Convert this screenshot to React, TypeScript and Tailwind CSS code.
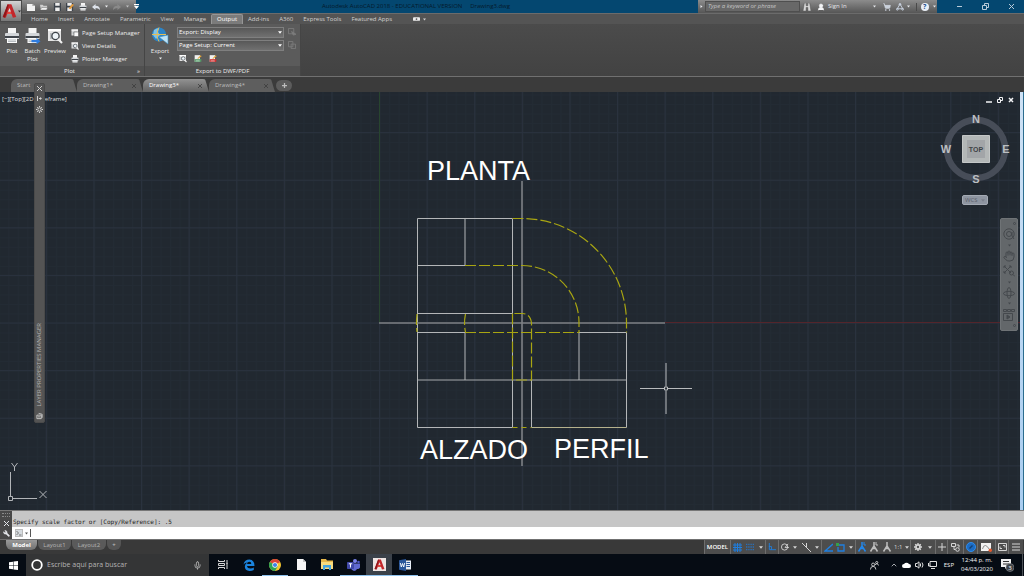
import React from 'react'
import { clsx } from 'clsx'
import { ChevronUp, Hand, Mic, Settings, ShoppingCart, UserRound, Wrench } from 'lucide-react'

const Caret: React.FC<{ className?: string }> = ({ className }) => (
    <svg viewBox="0 0 6 4" className={clsx('w-1 h-[3px] shrink-0 fill-current', className)}>
        <path d="M0 0h6L3 4z" />
    </svg>
)

const PrinterGlyph: React.FC<{ className?: string; arrow?: boolean }> = ({ className, arrow }) => (
    <svg viewBox="0 0 16 16" className={className}>
        <path d="M4 0h8v6H4z" fill="#f4f4f4" />
        <path d="M1 6q0-1 1-1h12q1 0 1 1v5H1z" fill="#d3d6d9" />
        <path d="M1 8h14v2H1z" fill="#41464c" />
        <path d="M3 10h10v5H3z" fill="#fafafa" />
        <path d="M4 12h8M4 13.500h8" stroke="#9aa0a6" strokeWidth=".7" />
        {arrow && <path d="M7 12h5v-2l4 3.200-4 3v-2H7z" fill="#2f7de0" />}
    </svg>
)

const PageGlyph: React.FC<{ className?: string; lens?: boolean }> = ({ className, lens }) => (
    <svg viewBox="0 0 16 16" className={className}>
        <path d="M1 1h13v12H1z" fill="#e4e4e4" />
        <path d="M1 1h13v2H1z" fill="#fff" />
        <path d="M3 5h9v6H3z" fill="#b6babd" />
        {lens ? (
            <>
                <circle cx="8.500" cy="8" r="3.600" fill="#eef4f8" stroke="#3f454b" strokeWidth="1.300" />
                <path d="m11 11 4 4" stroke="#f0f0f0" strokeWidth="2.200" />
            </>
        ) : (
            <path d="M6 6h9v9H6z" fill="#fafafa" stroke="#4a4a4a" />
        )}
    </svg>
)

const SheetGlyph: React.FC<{ className?: string; tone: string }> = ({ className, tone }) => (
    <svg viewBox="0 0 12 12" className={className}>
        <path d="M1 1h8v10H1z" fill="#f1f1f1" />
        <path d="M1 7h10v4H1z" fill={tone} />
        <path d="m5 6 5-5 1.500 1.500-5 4z" fill="#e5a63a" />
        <path d="M2.500 9.500h6" stroke="#fff" strokeWidth=".8" />
    </svg>
)

const AcadLogo: React.FC<{ className?: string }> = ({ className }) => (
    <svg viewBox="0 0 20 20" className={className}>
        <path d="M7.500 1h5L19 18l-4.500 1-1.800-5H7l-2 5-4-1z" fill="#c3272b" />
        <path d="M7.500 1 9 2 4 19l-3-1z" fill="#8f1519" />
        <path d="m10 6 2 5H8z" fill="#ddd" />
        <path d="M7 14h5.700l-1-3-5 1z" fill="#e84a3f" />
    </svg>
)

const QuickAccess: React.FC = () => (
    <div className="flex items-center w-[114px] h-[13px] pl-[5px] gap-[5px] bg-linear-to-b from-[#909090] to-[#565656] text-gray-100">
        <button aria-label="New"><svg viewBox="0 0 9 9" className="w-2 h-2"><path d="M0 1h6l3 2.500V9H0z" fill="#f2f2f2" /><path d="M6 1v2.500h3" fill="#aaa" /></svg></button>
        <button aria-label="Open"><svg viewBox="0 0 9 9" className="w-2 h-2"><path d="M0 2h3l1 1h4v5H1z" fill="#cfcfcf" /><path d="M2 5h7L7 8H0z" fill="#f1f1f1" stroke="#555" strokeWidth=".5" /></svg></button>
        <button aria-label="Save"><svg viewBox="0 0 9 9" className="w-2 h-2"><path d="M1 0h8v9H1z" fill="#3d434b" /><path d="M2.500 0h5v3h-5zM2.500 5h5v4h-5z" fill="#eee" /></svg></button>
        <button aria-label="Save As"><svg viewBox="0 0 9 9" className="w-2 h-2"><path d="M0 0h8v9H0z" fill="#3d434b" /><path d="M1.500 0h5v3h-5zM1.500 5h5v4h-5z" fill="#eee" /><path d="m3 6 4-5 2 1-4 5z" fill="#e39b3c" /></svg></button>
        <button aria-label="Print"><PrinterGlyph className="w-2 h-2" /></button>
        <button aria-label="Undo"><svg viewBox="0 0 9 9" className="w-2 h-2"><path d="M4 1v2q5 0 5 5-2-2.500-5-2.500V8L0 4.500z" fill="#dde2ea" /></svg></button>
        <Caret className="w-[3px]" />
        <button aria-label="Redo"><svg viewBox="0 0 9 9" className="w-2 h-2"><path d="M5 1v2Q0 3 0 8q2-2.500 5-2.500V8l4-3.500z" fill="#8a8a8a" /></svg></button>
        <Caret className="w-[3px] opacity-60" />
        <svg viewBox="0 0 6 6" className="w-[5px] h-[5px] shrink-0 fill-white"><path d="M0 0h6v1.500H0zM0 2.500h6L3 6z" /></svg>
    </div>
)

const TitleBar: React.FC = () => (
    <div className="flex h-[13px] bg-[#044770] text-[6px] leading-[13px]">
        <div className="w-[22px]" />
        <QuickAccess />
        <h1 className="flex-1 pl-[186px] text-[#041a2b] whitespace-pre">Autodesk AutoCAD 2018 - EDUCATIONAL VERSION     Drawing3.dwg</h1>
        <div className="flex items-center w-[239px] bg-linear-to-b from-[#8c8c8c] to-[#565656] text-gray-200">
            <Caret className="w-[3px] mx-[2px] -rotate-90" />
            <input aria-label="Search help" placeholder="Type a keyword or phrase"
                className="w-[95px] h-[11px] px-[2px] bg-[#686868] border border-[#4f4f4f] text-[6px] italic placeholder:text-[#c4c4c4]" />
            <button aria-label="Search" className="ml-[3px]">
                <svg viewBox="0 0 9 9" className="w-2 h-2 fill-[#d8d8d8] stroke-[#444] stroke-[.5]"><path d="M1.500 0h2v3h2V0h2L9 9H5.500V5h-2v4H0z" /></svg>
            </button>
            <button className="flex items-center ml-[6px] gap-[3px]">
                <UserRound className="w-2 h-2 fill-gray-100 stroke-gray-100" />
                Sign In
            </button>
            <Caret className="w-[3px] ml-[26px]" />
            <button aria-label="App store" className="ml-[7px]"><ShoppingCart className="w-2 h-2 fill-[#c8d0da] stroke-[#d7dde6]" /></button>
            <button aria-label="Connect" className="flex items-center ml-[5px] gap-[3px]">
                <svg viewBox="0 0 9 9" className="w-2 h-2 fill-none stroke-[#cdd8e6]"><path d="m4.500 1 3 5.500h-6z" /><circle cx="4.500" cy="1.500" r="1" /><circle cx="1.500" cy="7" r="1" /><circle cx="7.500" cy="7" r="1" /></svg>
                <Caret className="w-[3px]" />
            </button>
            <button aria-label="Help" className="flex items-center ml-[6px] pl-1 gap-[4px] border-l border-[#4a4a4a]">
                <span className="w-2 h-2 rounded-full bg-[#e9eef5] text-[#23508e] text-[7px] leading-2 font-bold">?</span>
                <Caret className="w-[3px]" />
            </button>
        </div>
        <div className="flex items-center justify-around w-[87px] pl-[10px] text-[#b9cbd9]">
            <button aria-label="Minimize"><svg viewBox="0 0 7 7" className="w-[7px] h-[7px] stroke-current"><path d="M1 3.500h5" /></svg></button>
            <button aria-label="Restore"><svg viewBox="0 0 7 7" className="w-[7px] h-[7px] fill-none stroke-current"><path d="M.5 2.500h4v4h-4zM2.500 2V.5h4v4H5" /></svg></button>
            <button aria-label="Close"><svg viewBox="0 0 7 7" className="w-[7px] h-[7px] stroke-current"><path d="m1 1 5 5M6 1 1 6" /></svg></button>
        </div>
    </div>
)

const RIBBON_TABS = ['Home', 'Insert', 'Annotate', 'Parametric', 'View', 'Manage', 'Output', 'Add-ins', 'A360', 'Express Tools', 'Featured Apps']

const RibbonTabs: React.FC = () => (
    <nav className="flex items-end h-[11px] pl-[26px] bg-[#545454] border-t border-[#6b6b6b] text-[6px] leading-[9px] text-[#d2d2d2]">
        {RIBBON_TABS.map((tab) => (
            <button key={tab}
                className={clsx('h-[10px] px-[5px] whitespace-nowrap', tab === 'Output' && 'bg-[#7b7b7b] border border-b-0 border-[#969696] rounded-t-xs text-white')}>
                {tab}
            </button>
        ))}
        <button aria-label="Ribbon display" className="flex items-center h-[10px] ml-4 gap-[3px]">
            <svg viewBox="0 0 8 4" className="w-[7px] h-1"><rect width="8" height="4" rx="1" fill="#eee" /><circle cx="4" cy="2" r="1" fill="#555" /></svg>
            <Caret className="w-[3px]" />
        </button>
    </nav>
)

const PlotPanel: React.FC = () => (
    <section className="flex flex-col w-[145px] border-r border-[#454545]">
        <div className="flex flex-1 pt-[4px]">
            <button className="flex flex-col items-center w-[24px] gap-[3px]"><PrinterGlyph className="w-4 h-4" />Plot</button>
            <button className="flex flex-col items-center w-[17px] gap-[3px]"><PrinterGlyph className="w-[17px] h-4" arrow />Batch<br />Plot</button>
            <button className="flex flex-col items-center w-[28px] gap-[3px]"><PageGlyph className="w-4 h-4" lens />Preview</button>
            <div className="flex flex-col ml-[2px] gap-[4px]">
                <button className="flex items-center h-[9px] gap-[3px] whitespace-nowrap"><PageGlyph className="w-2 h-2" />Page Setup Manager</button>
                <button className="flex items-center h-[9px] gap-[3px]"><PageGlyph className="w-2 h-2" lens />View Details</button>
                <button className="flex items-center h-[9px] gap-[3px]"><PrinterGlyph className="w-2 h-2" />Plotter Manager</button>
            </div>
        </div>
        <div className="flex h-[10px] pr-1 bg-[#505050]">
            <h2 className="flex-1 pl-[2px] text-center leading-[10px]">Plot</h2>
            <button aria-label="Plot options" className="leading-[10px]">»</button>
        </div>
    </section>
)

const DropField: React.FC<{ label: string; value: string }> = ({ label, value }) => (
    <div className="relative text-white">
        <select aria-label={label}
            className="block appearance-none w-[107px] h-[11px] pl-[1px] bg-linear-to-b from-[#585858] to-[#707070] border border-[#7f7f7f] text-[6px] leading-[9px]">
            <option>{value}</option>
        </select>
        <Caret className="absolute right-[2px] top-[4px] pointer-events-none" />
    </div>
)

const ExportPanel: React.FC = () => (
    <section className="flex flex-col w-[156px] border-r border-[#454545]">
        <div className="flex flex-1 pt-[3px]">
            <button className="flex flex-col items-center w-[30px] gap-[2px]">
                <svg viewBox="0 0 18 18" className="w-[18px] h-[18px]">
                    <circle cx="8" cy="7.500" r="7" fill="#2c84c7" />
                    <path d="M3 3q3-2 5-2l-1 4 2 3-4 4-3-4z" fill="#7fc3ea" />
                    <path d="M8 .5q-4 7 0 14M1 7.500h14" stroke="#e7bd52" fill="none" />
                    <path d="m8 10 9-2v9z" fill="#bfe3f5" stroke="#3a8ec4" strokeWidth=".6" />
                </svg>
                Export
                <Caret className="w-[3px]" />
            </button>
            <div className="flex flex-col ml-[2px] gap-[2px]">
                <DropField label="Export" value="Export: Display" />
                <DropField label="Page setup" value="Page Setup: Current" />
                <div className="flex mt-px ml-[2px] gap-[7px]">
                    <button aria-label="Preview"><PageGlyph className="w-2 h-[9px]" lens /></button>
                    <button aria-label="DWF"><SheetGlyph className="w-2 h-[9px]" tone="#559a68" /></button>
                    <button aria-label="PDF"><SheetGlyph className="w-2 h-[9px]" tone="#cf3030" /></button>
                </div>
            </div>
            <div className="flex flex-col ml-1 mt-px gap-[5px] text-[#7c7c7c]">
                <button aria-label="Select window" disabled><svg viewBox="0 0 9 9" className="w-2 h-2 fill-none stroke-current"><path d="M.5.5h6v6h-6z" /><path d="m4 4 5 3-3 1z" fill="currentColor" /></svg></button>
                <button aria-label="Page setup override" disabled><svg viewBox="0 0 9 9" className="w-2 h-2 fill-none stroke-current"><path d="M.5.5h5v6h-5zM3.500 3.500h5v5h-5z" /></svg></button>
            </div>
        </div>
        <h2 className="h-[10px] bg-[#505050] text-center leading-[10px]">Export to DWF/PDF</h2>
    </section>
)

const FILE_TABS = ['Start', 'Drawing1*', 'Drawing3*', 'Drawing4*']

const FileTabs: React.FC = () => (
    <div className="flex items-end h-[16px] pl-[11px] bg-[#3b3b3b] border-t border-[#707070] text-[6px] leading-[13px]">
        {FILE_TABS.map((tab) => (
            <div key={tab}
                className={clsx('flex items-center w-[66px] h-[13px] pl-[6px] pr-[7px] rounded-t-md [clip-path:polygon(0_0,62px_0,100%_100%,0_100%)]',
                    tab === 'Drawing3*' ? 'bg-linear-to-b from-[#929292] to-[#626262] text-white' : 'bg-[#5e5e5e] text-[#bcbcbc]')}>
                <button className="flex-1 text-left">{tab}</button>
                {tab !== 'Start' && (
                    <button aria-label={`Close ${tab}`}>
                        <svg viewBox="0 0 5 5" className="w-1 h-1 stroke-[#3c3c3c]"><path d="m0 0 5 5M5 0 0 5" /></svg>
                    </button>
                )}
            </div>
        ))}
        <button aria-label="New tab" className="grid place-items-center w-[16px] h-[11px] mb-px ml-px rounded-full bg-[#5c5c5c]">
            <svg viewBox="0 0 6 6" className="w-[5px] h-[5px] stroke-[#bdbdbd] stroke-[1.500]"><path d="M3 0v6M0 3h6" /></svg>
        </button>
    </div>
)

// Model space; coordinates are measured from the top left of the drawing area.
const Drawing: React.FC = () => (
    <svg className="block w-full h-full" fontFamily="Liberation Sans, Arial, sans-serif">
        <defs>
            <pattern id="minor" width="9.52" height="9.52" x="379.5" y="231" patternUnits="userSpaceOnUse">
                <path d="M.5 0v10M0 .5h10" stroke="#232b34" fill="none" />
            </pattern>
            <pattern id="major" width="47.6" height="47.6" x="379" y="230.500" patternUnits="userSpaceOnUse">
                <path d="M.5 0v48M0 .5h48" stroke="#2a323e" fill="none" />
            </pattern>
        </defs>
        <rect width="100%" height="100%" fill="#212830" />
        <rect width="100%" height="100%" fill="url(#minor)" />
        <rect width="100%" height="100%" fill="url(#major)" />
        <path d="M379.500 0v231" stroke="#28452f" />
        <path d="M665 230.500h2000" stroke="#54252b" />

        <g fill="none" stroke="#b4b6b8">
            <path d="M417.500 126.500h95v209h-95zM417.500 173.500h47.500M465 126.500v47M417.500 221.500h95M417.500 240.500h47.500M465 240.500v47.500" />
            <path d="M531.500 288v47.500M579 240.500h47.500v95M579 240.500V288" />
            <path d="M417.500 288h209" strokeOpacity=".9" />
            <path d="M531.500 335.500h95" stroke="#b5b18c" />
        </g>
        <path d="M379 231h286M522 89v285" stroke="#7d8084" strokeWidth="1.600" />

        <g fill="none" stroke="#a8a512" strokeWidth="1.200" strokeDasharray="11 3">
            <path d="M512.500 126.500h10a104.500 104.500 0 0 1 104 104v10" />
            <path d="M465 173.500h57a57 57 0 0 1 57 57v10" />
            <path d="M465 240.500h114" />
            <path d="M512.500 221.500V288h19v-57q-1-9-9-9.500h-10" />
            <path d="M512.500 335.500h19" strokeDasharray="5 4" />
            <path d="M417 222q-1 9 0 18M465.500 222q-2 9 0 18" />
        </g>

        <g fill="#fff" fontSize="27">
            <text x="427" y="88">PLANTA</text>
            <text x="420" y="367">ALZADO</text>
            <text x="554" y="366">PERFIL</text>
        </g>

        <g stroke="#b9bbbd" fill="none">
            <path d="M640 296.500h24M668 296.500h24M666 271v23.500M666 298.500v23.500" />
            <path d="M664.500 295h3v3h-3z" />
        </g>
    </svg>
)

const UcsIcon: React.FC = () => (
    <svg viewBox="0 0 50 44" className="absolute left-0 bottom-[6px] w-[50px] h-[44px] fill-none stroke-[#b2b5b8]">
        <path d="M10.500 12v24M13 38.500h24M8.500 36.500h4v4h-4z" />
        <path d="m11.500 3 3 4 3-4M14.500 7v4M39.500 31l7 7M46.500 31l-7 7" />
    </svg>
)

const ViewCube: React.FC = () => (
    <div className="absolute right-[8px] top-[20px] flex flex-col items-center">
        <svg viewBox="0 0 74 76" className="w-[74px] h-[76px]" fontFamily="Liberation Sans, Arial, sans-serif" fontWeight="bold" textAnchor="middle">
            <circle cx="38" cy="37" r="29" fill="none" stroke="#474d58" strokeWidth="6.500" />
            <path d="M24.500 23.500h27v27h-27z" fill="#b3b7b7" stroke="#c4c7c7" />
            <path d="M29 28h18v18H29z" fill="#a2a5a8" />
            <text x="38" y="39.500" fontSize="7" fill="#3f4347">TOP</text>
            <g fontSize="11" fill="#bcbfc2">
                <text x="38" y="11">N</text>
                <text x="8" y="41">W</text>
                <text x="68" y="41">E</text>
                <text x="38" y="71">S</text>
            </g>
        </svg>
        <button className="flex items-center justify-between w-[26px] h-[10px] mt-[7px] px-[2px] rounded-xs bg-[#8e95a1] border border-[#a4aab4] text-[6px] leading-2 text-[#5b616c]">
            WCS
            <Caret className="opacity-40" />
        </button>
    </div>
)

const NavBar: React.FC = () => (
    <div className="absolute right-[2px] top-[126px] flex flex-col items-center justify-between w-[18px] h-[113px] py-[3px] rounded-xs bg-[#63676a] border border-[#6f7376] text-[#45494d]">
        <span className="self-end w-[3px] h-[3px] mr-px rounded-full border border-current" />
        <button aria-label="Steering wheel"><svg viewBox="0 0 12 12" className="w-3 h-3 fill-none stroke-current"><circle cx="6" cy="6" r="5.200" /><circle cx="6" cy="6" r="2.500" /><path d="M9 4v4l2 3" /></svg></button>
        <Caret className="w-[3px] h-[2px]" />
        <button aria-label="Pan"><Hand className="w-3 h-3" /></button>
        <button aria-label="Zoom extents"><svg viewBox="0 0 12 12" className="w-3 h-3 fill-none stroke-current"><path d="m1 1 7 7M8 1 1 8M1 3V1h2M6 1h2v2M1 6v2h2" /><circle cx="8.500" cy="8" r="2" /><path d="m10 9.500 2 2" /></svg></button>
        <Caret className="w-[3px] h-[2px]" />
        <button aria-label="Orbit"><svg viewBox="0 0 12 12" className="w-3 h-3 fill-none stroke-current"><ellipse cx="6" cy="6.500" rx="5.500" ry="2.200" /><ellipse cx="6" cy="6" rx="2" ry="5.500" /></svg></button>
        <Caret className="w-[3px] h-[2px]" />
        <button aria-label="ShowMotion"><svg viewBox="0 0 12 12" className="w-3 h-3 fill-none stroke-current"><path d="M.5.5h3v2h-3zM4.500.5h3v2h-3zM8.500.5h3v2h-3zM.5 4.500h9v7h-9z" /><path d="m4 6 3 2-3 2z" fill="currentColor" /></svg></button>
        <span className="self-end w-[3px] h-[3px] mr-px rounded-full border border-current" />
    </div>
)

const LayerPalette: React.FC = () => (
    <aside className="absolute left-[34px] top-[83px] z-10 flex flex-col items-center w-[11px] h-[340px] py-[2px] gap-[5px] rounded-xs bg-[#545454] border border-[#4a4a4a] text-[#d0d0d0]">
        <button aria-label="Close palette"><svg viewBox="0 0 5 5" className="w-[5px] h-[5px] stroke-current"><path d="m0 0 5 5M5 0 0 5" /></svg></button>
        <button aria-label="Auto-hide"><svg viewBox="0 0 5 5" className="w-[5px] h-[5px] stroke-current fill-current"><path d="M.5 0v5M2 2.500h2" /><path d="m3 1 2 1.500L3 4z" stroke="none" /></svg></button>
        <button aria-label="Palette properties">
            <svg viewBox="0 0 7 7" className="w-[7px] h-[7px] fill-none stroke-current"><circle cx="3.500" cy="3.500" r="1.700" /><path d="M3.500 0v1M3.500 6v1M0 3.500h1M6 3.500h1M1 1l.8.8M5.200 5.200l.8.8M6 1l-.8.8M1 6l.8-.8" /></svg>
        </button>
        <h2 className="mt-auto text-[6px] leading-[9px] text-[#b5b5b5] whitespace-nowrap [writing-mode:vertical-rl] rotate-180">LAYER PROPERTIES MANAGER</h2>
        <svg viewBox="0 0 8 8" className="w-[7px] h-2 fill-none stroke-current"><path d="M1 3h5v4H1zM2 5h3M3 1l4 1v4" /></svg>
    </aside>
)

const CommandLine: React.FC = () => (
    <div className="flex h-[29px] border-t border-[#777]">
        <div className="flex flex-col items-center w-[12px] pt-[2px] gap-[4px] bg-[#484848] text-gray-200">
            <span className="w-2 h-1 border-y border-dotted border-[#8a8a8a]" />
            <button aria-label="Close command line"><svg viewBox="0 0 5 5" className="w-[5px] h-[5px] stroke-current"><path d="m0 0 5 5M5 0 0 5" /></svg></button>
            <button aria-label="Customize"><Wrench className="w-[7px] h-[7px] fill-current -scale-x-100" /></button>
        </div>
        <div className="flex flex-col flex-1 font-['DejaVu_Sans_Mono',monospace] text-[6px]">
            <p className="h-[16px] pl-px pt-[6px] bg-[#c6c6c6] leading-[9px] text-[#222]">Specify scale factor or [Copy/Reference]: .5</p>
            <label className="flex items-center h-[12px] pl-[3px] gap-[2px] bg-white text-[#555]">
                <svg viewBox="0 0 8 8" className="w-2 h-2 fill-none stroke-[#777]"><rect x=".5" y=".5" width="7" height="7" fill="#d7dce0" stroke="#bbb" /><path d="m1.500 2 2 2-2 2M4 6h2.500" /></svg>
                <Caret className="w-[3px] h-[2px]" />
                <span className="w-px h-2 bg-[#555]" />
                <input aria-label="Command" className="flex-1 h-[11px] outline-none" />
            </label>
        </div>
    </div>
)

const StatusCell: React.FC<{ className: string; children: React.ReactNode }> = ({ className, children }) => (
    <div className={clsx('flex items-center justify-around border-r border-[#6e6e6e]', className)}>{children}</div>
)

const PersonGlyph: React.FC<{ className: string; tag?: boolean }> = ({ className, tag }) => (
    <svg viewBox="0 0 10 10" className={clsx('w-[10px] h-[10px] fill-none stroke-current stroke-[1.500]', className)}>
        <path d="M5 0v4L1.500 9.500M5 4l3.500 5.500M3 6.500h4" />
        {tag && <path d="M7 0v3h2" strokeWidth="1" />}
    </svg>
)

const StatusBar: React.FC = () => (
    <div className="flex justify-between h-[15px] bg-[#393939] border-t border-[#707070] text-[6px] leading-[10px]">
        <div className="flex pl-[6px] gap-px text-[#b5b5b5]">
            <button className="h-[10px] w-[31px] rounded-b-md bg-linear-to-b from-[#999] to-[#707070] text-white font-bold">Model</button>
            <button className="h-[10px] w-[33px] rounded-b-md bg-[#5a5a5a]">Layout1</button>
            <button className="h-[10px] w-[34px] rounded-b-md bg-[#5a5a5a]">Layout2</button>
            <button className="h-[10px] w-[14px] rounded-b-md bg-[#555] font-bold">+</button>
        </div>
        <div className="flex h-[14px] mr-px bg-[#4d4d4d] border-l border-[#6e6e6e] text-[#d5d5d5]">
            <StatusCell className="w-[26px]"><button className="font-semibold text-white">MODEL</button></StatusCell>
            <StatusCell className="w-[35px]">
                <button aria-label="Grid"><svg viewBox="0 0 9 9" className="w-[9px] h-[9px] stroke-[#1f7fe0]"><path d="M2 0v9M4.500 0v9M7 0v9M0 2h9M0 4.500h9M0 7h9" /></svg></button>
                <button aria-label="Snap"><svg viewBox="0 0 9 9" className="w-2 h-2 stroke-[#2a6fb8] stroke-[1.500]"><path d="M0 1.500h9M0 4.500h9M0 7.500h9" strokeDasharray="1.500 1" /></svg></button>
                <Caret />
            </StatusCell>
            <StatusCell className="w-[13px]">
                <button aria-label="Ortho"><svg viewBox="0 0 9 9" className="w-2 h-2 fill-none stroke-[#1f7fe0]"><path d="M1.500 0v7.500H9M1 4h3v3.500" /></svg></button>
            </StatusCell>
            <StatusCell className="w-[43px]">
                <button aria-label="Polar"><svg viewBox="0 0 9 9" className="w-2 h-2 fill-none stroke-current"><circle cx="4" cy="4.500" r="3.500" /><path d="M4.500 5H9M4.500 5 8 1" /></svg></button>
                <Caret />
                <button aria-label="Isometric"><svg viewBox="0 0 9 9" className="w-[9px] h-[9px] fill-none stroke-current"><path d="m0 0 9 9M4.500 0v4.500" /></svg></button>
                <Caret />
            </StatusCell>
            <StatusCell className="w-[34px]">
                <button aria-label="Tracking"><svg viewBox="0 0 9 9" className="w-[9px] h-[9px] fill-none stroke-[#1f7fe0] stroke-[1.500]"><path d="M9 1 1 8h8" /></svg></button>
                <button aria-label="Object snap"><svg viewBox="0 0 9 9" className="w-[9px] h-[9px] fill-none stroke-[#1f7fe0]"><path d="M3 2h5v6H2V4" strokeWidth="1.300" /><path d="M0 0h3v3H0z" fill="#35a04a" stroke="none" /></svg></button>
                <Caret />
            </StatusCell>
            <StatusCell className="w-[55px]">
                <PersonGlyph className="text-[#2388ec]" tag />
                <PersonGlyph className="text-[#bfbfbf]" tag />
                <PersonGlyph className="text-[#bfbfbf]" />
                <button>1:1</button>
                <Caret />
            </StatusCell>
            <StatusCell className="w-[25px]">
                <button aria-label="Workspace">
                    <svg viewBox="0 0 9 9" className="w-2 h-2 fill-none stroke-current"><circle cx="4.500" cy="4.500" r="2.300" strokeWidth="2" /><path d="M4.500 0v9M0 4.500h9M1.300 1.300l6.400 6.400M7.700 1.300 1.300 7.700" strokeDasharray="1.500 6 1.500" strokeWidth="1.500" /></svg>
                </button>
                <Caret />
            </StatusCell>
            <StatusCell className="w-[12px]"><svg viewBox="0 0 8 8" className="w-2 h-2 stroke-current"><path d="M4 0v8M0 4h8" /></svg></StatusCell>
            <StatusCell className="w-[16px]"><svg viewBox="0 0 9 9" className="w-[9px] h-[9px] fill-none stroke-current"><path d="M.5.5h4v3h-4zM5.500 2h2.500v2.500M3 4v2.500h1.500" /><circle cx="6.500" cy="6.500" r="1.800" /></svg></StatusCell>
            <StatusCell className="w-[14px]"><svg viewBox="0 0 10 10" className="w-[10px] h-[10px]"><circle cx="5" cy="5" r="4.500" fill="#1c6cc4" stroke="#2f8ded" /><path d="m3 6 3-3 1 1-3 3z" fill="#123f73" /></svg></StatusCell>
            <StatusCell className="w-[18px]"><svg viewBox="0 0 11 9" className="w-[11px] h-[9px]"><path d="M0 0h10v8H0z" fill="#f2f2f2" /><path d="M1.500 6q1-4 3-3.500T8 6" fill="none" stroke="#777" strokeWidth=".8" /><circle cx="9.300" cy="7.300" r="1.700" fill="#e0582d" /></svg></StatusCell>
            <StatusCell className="w-[13px]"><svg viewBox="0 0 9 8" className="w-[9px] h-2 fill-none stroke-current"><path d="M.5.5h8v7h-8zM5 2.500h2v2M4 5.500H2v-2" /></svg></StatusCell>
            <button aria-label="Customization" className="px-[3px]"><svg viewBox="0 0 8 8" className="w-2 h-2 stroke-current"><path d="M0 1h8M0 4h8M0 7h8" /></svg></button>
        </div>
    </div>
)

const TaskButton: React.FC<{ label: string; open?: boolean; active?: boolean; children: React.ReactNode }> = ({ label, open, active, children }) => (
    <button aria-label={label}
        className={clsx('grid place-items-center w-[26px] border-b', open ? 'border-[#8fc3ee]' : 'border-transparent', active && 'bg-[#3b4149]')}>
        {children}
    </button>
)

const Taskbar: React.FC = () => (
    <div className="flex h-[22px] bg-[#060c14] text-[6px] text-gray-100">
        <button aria-label="Start" className="grid place-items-center w-[26px]">
            <svg viewBox="0 0 9 9" className="w-[9px] h-[9px] fill-white"><path d="m0 1.300 4-.6v3.500H0zM4.500.6 9 0v4.200H4.500zM0 4.800h4v3.500l-4-.6zM4.500 4.800H9V9l-4.500-.6z" /></svg>
        </button>
        <label className="flex items-center w-[183px] pl-[5px] pr-[7px] gap-[4px] bg-[#343536]">
            <svg viewBox="0 0 12 12" className="w-3 h-3 fill-none stroke-white stroke-[1.800]"><circle cx="6" cy="6" r="4.800" /></svg>
            <input aria-label="Buscar" placeholder="Escribe aquí para buscar" className="flex-1 min-w-0 text-[7px] outline-none placeholder:text-[#b4b4b4]" />
            <Mic className="w-[9px] h-[9px] text-[#c4c4c4]" />
        </label>
        <div className="flex pl-px">
            <TaskButton label="Task view">
                <svg viewBox="0 0 10 9" className="w-[10px] h-[9px] fill-none stroke-[#d6d6d6]"><path d="M.5 0v1.500h6V0M.5 3.500h6v2h-6zM.5 9V7.500h6V9M9 0v9M8.500 3.500h1" /></svg>
            </TaskButton>
            <TaskButton label="Edge">
                <svg viewBox="0 0 12 12" className="w-3 h-3"><path d="M.5 5.500Q1.500.5 6.500.5q5 .5 5 6.500H4q.3 2.500 3.500 2.500 2 0 3.300-1v2.500q-1.800 1-4.300 1Q1.800 11.500 1.800 7.500q.2-2.800 2.700-4Q1.800 3.700.5 5.500zM4 5h4.300q0-2.200-2-2.200T4 5z" fill="#1b83dc" /></svg>
            </TaskButton>
            <TaskButton label="Chrome" open>
                <svg viewBox="0 0 12 12" className="w-3 h-3"><circle cx="6" cy="6" r="6" fill="#f4c430" /><path d="M6 6 .8 3A6 6 0 0 1 11.200 3z" fill="#dc4437" /><path d="M6 6 .8 3A6 6 0 0 0 6 12l3-5z" fill="#2fa353" /><circle cx="6" cy="6" r="2.700" fill="#fff" /><circle cx="6" cy="6" r="2.100" fill="#3f81e8" /></svg>
            </TaskButton>
            <TaskButton label="Document">
                <svg viewBox="0 0 9 11" className="w-[9px] h-[11px]"><path d="M0 0h6l3 3v8H0z" fill="#f6f6f6" /><path d="M6 0v3h3" fill="#c4c4c4" /></svg>
            </TaskButton>
            <TaskButton label="Explorer">
                <svg viewBox="0 0 12 11" className="w-3 h-[11px]"><path d="M0 0h5l1 1.500h6V10H0z" fill="#e8b84a" /><path d="M0 3h12v7H0z" fill="#f9dc7f" /><path d="M2 6h8v5H8V8.500H4V11H2z" fill="#45a5e0" /></svg>
            </TaskButton>
            <TaskButton label="Teams" open>
                <svg viewBox="0 0 13 12" className="w-[13px] h-3"><circle cx="8" cy="2" r="2" fill="#7b83eb" /><circle cx="11.500" cy="3" r="1.300" fill="#5059c9" /><path d="M6 4.500h7v4q-1 2-3 1.500-1 2-3 2-3-1-3-3z" fill="#6069d0" /><rect y="3" width="7" height="7" rx=".7" fill="#4048a8" /><path d="M1.800 4.800h3.400M3.500 4.800v3.700" stroke="#fff" /></svg>
            </TaskButton>
            <TaskButton label="AutoCAD" open active>
                <span className="grid place-items-center w-[13px] h-[13px] bg-[#eee5e3]"><AcadLogo className="w-[11px] h-[11px]" /></span>
            </TaskButton>
            <TaskButton label="Word" open>
                <svg viewBox="0 0 12 12" className="w-3 h-3"><path d="M5 1.500h7v9H5z" fill="#e8eef7" /><path d="M7.500 3.500h3.500M7.500 5.500h3.500M7.500 7.500h3.500" stroke="#2b579a" /><path d="m0 1.300 7-1.300v12l-7-1.300z" fill="#2b579a" /><path d="m1.300 4 1 4 1.200-3.500L4.700 8l1-4" fill="none" stroke="#fff" strokeWidth=".9" /></svg>
            </TaskButton>
        </div>
        <div className="flex items-center ml-auto">
            <svg viewBox="0 0 10 10" className="w-[9px] h-[9px] mr-[11px] fill-none stroke-[#d6d6d6]"><circle cx="3.500" cy="4" r="1.700" /><path d="M.5 9.500q0-3.500 3-3.500t3 3.500M6 4.500Q6 3 7.500 3T9.500 5" /><circle cx="7.500" cy="1.700" r="1.200" /></svg>
            <ChevronUp className="w-2 h-2 mr-1" />
            <svg viewBox="0 0 9 6" className="w-[9px] h-[6px] mr-1 fill-white"><path d="M2 6a2 2 0 0 1 0-4 3 3 0 0 1 5 0 2 2 0 0 1 0 4z" /></svg>
            <svg viewBox="0 0 9 8" className="w-[9px] h-2 mr-1 fill-none stroke-[#e0e0e0]"><path d="M.5 2.500h1.500L4 .8v6.400L2 5.500H.5zM5.500 2.500v3M7 1.500q2 2.500 0 5" /></svg>
            <svg viewBox="0 0 9 8" className="w-[9px] h-2 mr-[7px] fill-none stroke-[#e0e0e0]"><path d="M2 .5h6.500v5H2zM3 7.500h4M.5 2v3h2" /></svg>
            <span className="mr-[7px]">ESP</span>
            <time className="w-[32px] mr-2 text-center leading-[9px] whitespace-nowrap">12:44 p. m.<br />04/03/2020</time>
            <button aria-label="Notificaciones" className="mr-[8px]">
                <svg viewBox="0 0 13 13" className="w-[13px] h-[13px]"><path d="M0 0h10v8H6L4 10V8H0z" fill="#f1f1f1" /><path d="M2 2.500h6M2 5h6" stroke="#333" /><circle cx="9" cy="8.500" r="4" fill="#3e4247" stroke="#8b8f93" strokeWidth=".6" /><text x="9" y="10.800" fontSize="6" fill="#fff" textAnchor="middle">3</text></svg>
            </button>
            <span className="h-[22px] w-[2px] border-l border-[#4c5157]" />
        </div>
    </div>
)

const App: React.FC = () => (
    <div className="relative flex flex-col h-screen overflow-hidden bg-[#3b3b3b] font-['Open_Sans','Noto_Sans',sans-serif]">
        <header>
            <TitleBar />
            <RibbonTabs />
            <div className="flex h-[52px] bg-linear-to-b from-[#4b4b4b] to-[#424242] text-[6px] leading-[8px] text-[#ececec]">
                <div className="flex bg-[#5b5b5b]">
                    <PlotPanel />
                    <ExportPanel />
                </div>
            </div>
            <FileTabs />
        </header>
        <button aria-label="Application menu" className="absolute left-0 top-0 flex items-center w-[22px] h-[22px] pl-px bg-linear-to-b from-[#d4d4d4] to-[#777] border border-[#4a4a4a]">
            <AcadLogo className="w-[15px] h-[16px]" />
            <Caret className="w-[3px] ml-px text-[#333]" />
        </button>

        <main className="flex flex-1 min-h-0">
            <div className="relative flex-1">
                <Drawing />
                <p className="absolute left-[2px] top-[3px] text-[6px] leading-[9px] text-[#dcdcdc]">[−][Top][2D Wireframe]</p>
                <UcsIcon />
                <div className="absolute right-[6px] top-[5px] flex gap-[5px] text-gray-100">
                    <button aria-label="Minimize drawing"><svg viewBox="0 0 6 6" className="w-[6px] h-[6px] stroke-current stroke-[1.500]"><path d="M0 5h6" /></svg></button>
                    <button aria-label="Restore drawing"><svg viewBox="0 0 6 6" className="w-[6px] h-[6px] fill-none stroke-current"><path d="M.5 2.500h3v3h-3zM2.500 2V.5h3v3H4" /></svg></button>
                    <button aria-label="Close drawing"><svg viewBox="0 0 6 6" className="w-[6px] h-[6px] stroke-current stroke-[1.500]"><path d="m1 1 4 4M5 1 1 5" /></svg></button>
                </div>
                <ViewCube />
                <NavBar />
            </div>
            <div className="w-[4px] bg-linear-to-b from-[#cfe2f5] to-[#a9cdf0] border-r border-[#2c6d8f]" />
        </main>
        <LayerPalette />

        <footer>
            <CommandLine />
            <StatusBar />
            <Taskbar />
        </footer>
    </div>
)

export default App
